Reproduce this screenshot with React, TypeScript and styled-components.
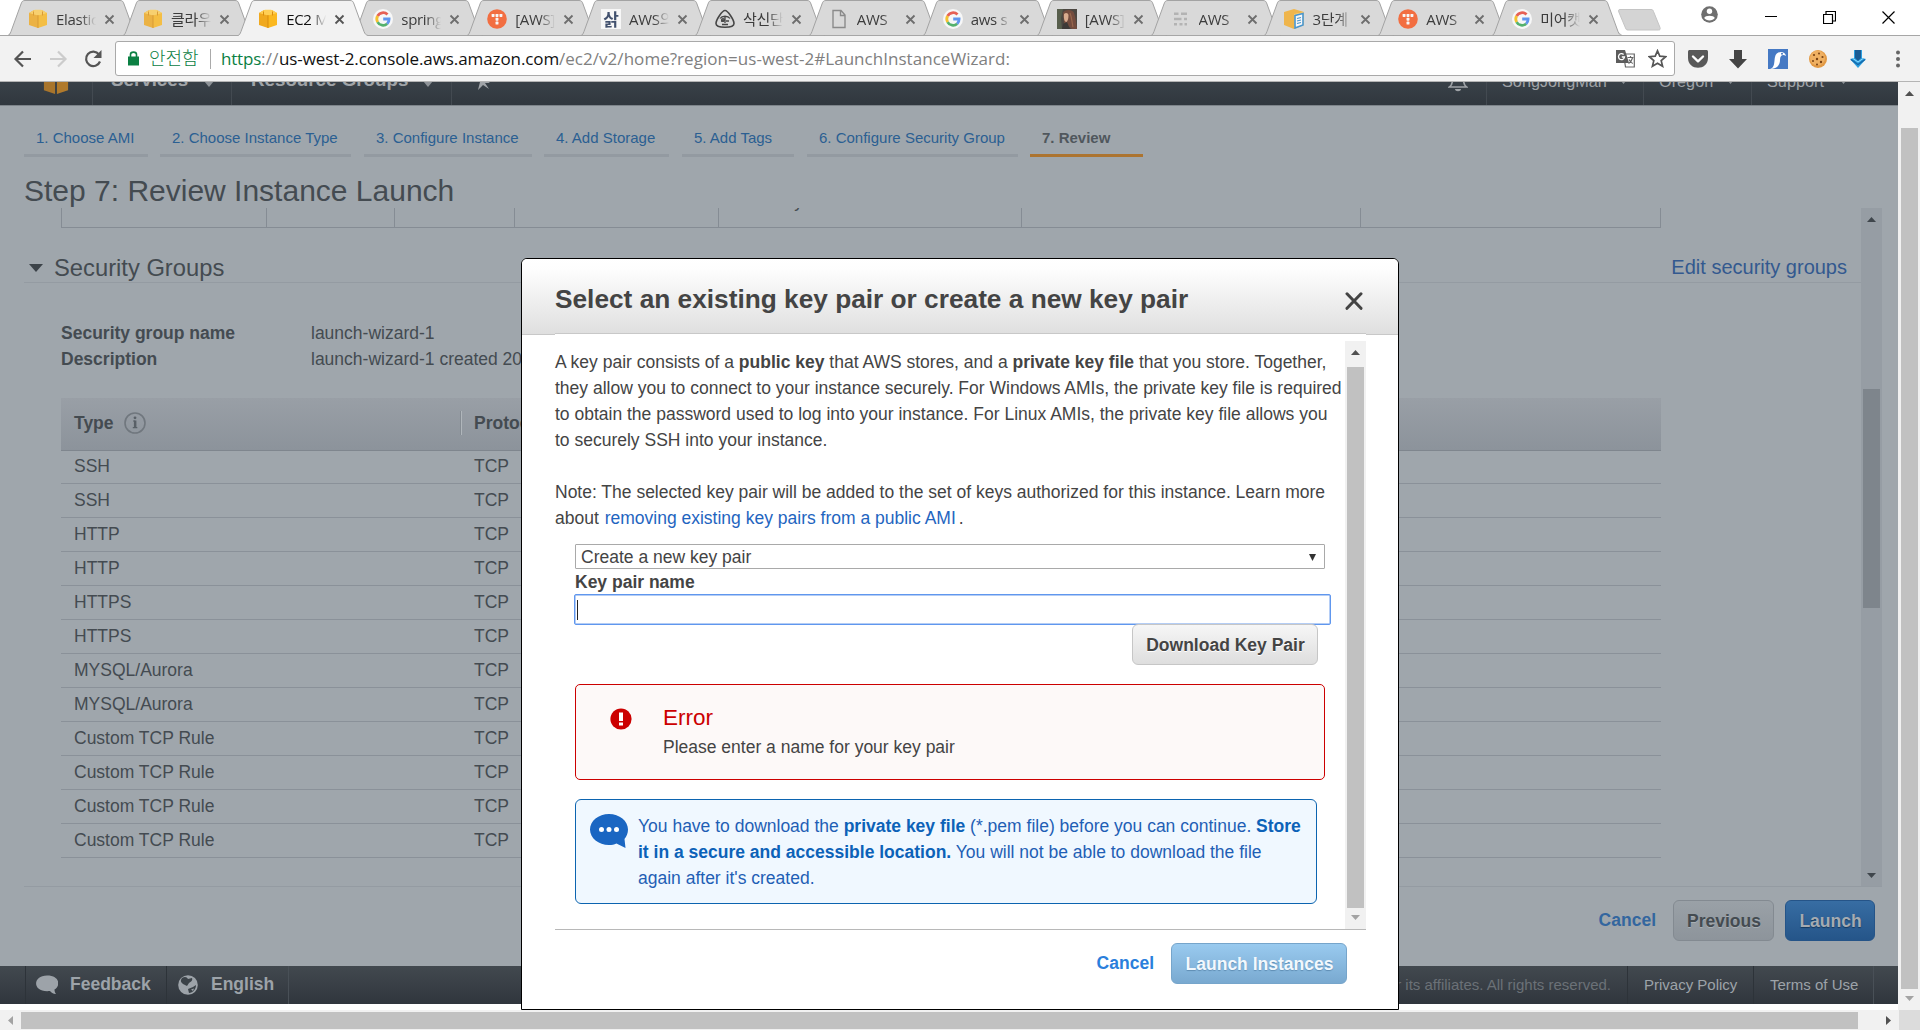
import React from "react";
import styled, { createGlobalStyle, css } from "styled-components";

const arial = `"Liberation Sans", Arial, "Noto Sans CJK KR", sans-serif`;
const ui = `"Open Sans", "Noto Sans CJK KR", "Noto Sans", sans-serif`;

const GlobalStyle = createGlobalStyle`
  *, *::before, *::after { box-sizing: border-box; }
  html, body { margin: 0; padding: 0; overflow: hidden; background: #fff; }
  svg { display: block; flex: none; }
`;

const Screen = styled.div`
  position: relative;
  display: flex;
  flex-direction: column;
  width: 1920px;
  height: 1030px;
  overflow: hidden;
  background: #fff;
  font-family: ${arial};
  font-size: 17.5px;
  color: #444;
`;

/* ---------- browser tab strip ---------- */

const TabStrip = styled.div`
  display: flex;
  flex: none;
  height: 36px;
  padding-left: 8px;
  border-bottom: 1px solid #a6a6a6;
`;

const TabItem = styled.div<{ $active?: boolean; $w: number }>`
  position: relative;
  z-index: ${(p) => (p.$active ? 2 : 1)};
  display: flex;
  align-items: center;
  flex: none;
  width: ${(p) => p.$w}px;
  height: 36px;
  padding: 2px 0 0 20px;
`;

const TabShape = styled.svg`
  position: absolute;
  left: 0;
  top: 0;
`;

const TabIcon = styled.div<{ $dim: boolean }>`
  position: relative;
  flex: none;
  width: 20px;
  height: 20px;
  opacity: ${(p) => (p.$dim ? 0.8 : 1)};
`;

const TabTitle = styled.div<{ $active?: boolean }>`
  position: relative;
  flex: none;
  width: 41px;
  margin-left: 8px;
  white-space: nowrap;
  font: 15px/22px ${ui};
  letter-spacing: -0.3px;
  color: ${(p) => (p.$active ? "#111" : "#3c3c3c")};
  mask-image: linear-gradient(to right, #000 60%, transparent 98%);
`;

const TabClose = styled.svg`
  position: relative;
  margin-left: 7px;
`;

const NewTab = styled.svg`
  margin: 9px 0 0 12px;
`;

const WindowControls = styled.div`
  display: flex;
  flex: 1;
  align-items: flex-start;
  padding-left: 37px;
  height: 35px;
`;

const ControlSlot = styled.div<{ $w: number; $top: number }>`
  display: flex;
  justify-content: center;
  flex: none;
  width: ${(p) => p.$w}px;
  padding-top: ${(p) => p.$top}px;
`;

/* ---------- address bar ---------- */

const Toolbar = styled.div`
  display: flex;
  align-items: center;
  flex: none;
  height: 46px;
  padding-left: 13px;
  background: #f2f2f2;
  border-bottom: 1px solid #b4b4b4;
`;

const NavButton = styled.div`
  display: flex;
  flex: none;
  width: 35px;
`;

const AddressBar = styled.div`
  display: flex;
  align-items: center;
  flex: none;
  width: 1560px;
  height: 35px;
  margin: 0 0 0 -3px;
  padding-left: 12px;
  background: #fff;
  border: 1px solid #a9a9a9;
  border-radius: 3px;
`;

const Secure = styled.span`
  flex: none;
  width: 62px;
  height: 20px;
  margin-left: 10px;
  font: 300 18px/18px ${ui};
  white-space: nowrap;
  color: #0b8043;
  border-right: 1px solid #aaa;
`;

const Url = styled.div`
  display: flex;
  flex: 1;
  margin-left: 10px;
  font: 17px/24px ${ui};
  white-space: pre;
  color: #808080;
`;

const UrlPart = styled.span<{ $color: string; $w: number; $ls: number }>`
  flex: none;
  width: ${(p) => p.$w}px;
  letter-spacing: ${(p) => p.$ls}px;
  color: ${(p) => p.$color};
`;

const BarIcons = styled.div`
  display: flex;
  align-items: center;
  gap: 13px;
  padding-right: 7px;
`;

const Extensions = styled.div`
  display: flex;
  align-items: center;
  gap: 20px;
  margin-left: 13px;
`;

/* ---------- scrollbars ---------- */

const Bar = styled.div<{ $bg: string }>`
  display: flex;
  flex-direction: column;
  align-items: center;
  flex: none;
  width: 21px;
  background: ${(p) => p.$bg};
`;

const ArrowCell = styled.div<{ $h: number; $top: number }>`
  flex: none;
  height: ${(p) => p.$h}px;
  padding-top: ${(p) => p.$top}px;
`;

const Thumb = styled.div<{ $h: number; $bg: string }>`
  flex: none;
  width: 17px;
  height: ${(p) => p.$h}px;
  background: ${(p) => p.$bg};
`;

const BarSpacer = styled.div`
  flex: 1;
`;

const HBar = styled.div`
  display: flex;
  align-items: center;
  flex: none;
  height: 20px;
  background: #f1f1f1;
`;

const HThumb = styled.div`
  width: 1837px;
  height: 17px;
  margin-left: 8px;
  background: #c1c1c1;
`;

const Corner = styled.div`
  width: 21px;
  height: 20px;
  margin-left: auto;
  background: #dcdcdc;
`;

/* ---------- console page ---------- */

const Viewport = styled.div`
  display: flex;
  flex: none;
  height: 928px;
  background: #f1f1f1;
`;

const Page = styled.div`
  display: flex;
  flex-direction: column;
  flex: none;
  width: 1898px;
  margin-right: 1px;
  padding-bottom: 6px;
  background: #fff;
`;

const NavWindow = styled.div`
  display: flex;
  align-items: flex-end;
  flex: none;
  height: 24px;
  overflow: hidden;
  background: linear-gradient(#394148, #30373e);
  border-bottom: 1px solid #7d848a;
`;

const NavRow = styled.div`
  display: flex;
  align-items: center;
  flex: 1;
  height: 50px;
  color: #a0a4a8;
`;

const NavItem = styled.div<{ $w: number; $pad: number; $bold?: boolean; $rule?: boolean }>`
  display: flex;
  align-items: center;
  flex: none;
  width: ${(p) => p.$w}px;
  height: 50px;
  padding: ${(p) => (p.$bold ? 0 : 2)}px 0 0 ${(p) => p.$pad}px;
  white-space: nowrap;
  font-size: ${(p) => (p.$bold ? 18.75 : 16.25)}px;
  font-weight: ${(p) => (p.$bold ? 700 : 400)};
  ${(p) =>
    p.$rule &&
    css`
      border-left: 1px solid #434a51;
    `}
`;

const NavLabel = styled.span<{ $w: number }>`
  flex: none;
  width: ${(p) => p.$w}px;
`;

const NavCaretIcon = styled.svg<{ $drop: number }>`
  margin-top: ${(p) => p.$drop}px;
`;

const Main = styled.div`
  display: flex;
  flex-direction: column;
  flex: 1;
  min-height: 0;
  background: #9fa6ac;
  color: #444b51;
`;

const Steps = styled.div`
  display: flex;
  flex: none;
  padding-left: 24px;
`;

const Step = styled.div<{ $w: number; $gap: number; $active?: boolean }>`
  flex: none;
  width: ${(p) => p.$w}px;
  height: 51px;
  margin-right: ${(p) => p.$gap}px;
  padding: 22px 0 0 12px;
  white-space: nowrap;
  font-size: 15px;
  line-height: 20px;
  font-weight: ${(p) => (p.$active ? 700 : 400)};
  color: ${(p) => (p.$active ? "#50575d" : "#2b5f92")};
  border-bottom: 3px solid ${(p) => (p.$active ? "#ac7430" : "#939aa1")};
`;

const Title = styled.h1`
  flex: none;
  height: 51px;
  margin: 0;
  padding: 16px 0 0 24px;
  font-size: 30px;
  line-height: 35px;
  font-weight: 400;
`;

const ScrollRegion = styled.div`
  display: flex;
  flex: none;
  width: 1858px;
  height: 679px;
  margin-left: 24px;
  border-bottom: 1px solid #949ba2;
`;

const ScrollContent = styled.div`
  flex: 1;
  overflow: hidden;
`;

const InstanceRow = styled.div`
  display: flex;
  width: 1600px;
  height: 20px;
  margin-left: 37px;
  overflow: hidden;
  border-bottom: 1px solid #858c94;
  border-right: 1px solid #858c94;
`;

const InstanceCell = styled.div<{ $w: number }>`
  flex: none;
  width: ${(p) => p.$w}px;
  padding-left: 12px;
  border-left: 1px solid #858c94;
  line-height: 26px;
`;

const CellText = styled.div`
  margin-top: -20px;
`;

const SectionHead = styled.div`
  display: flex;
  align-items: flex-end;
  height: 55px;
  padding: 0 14px 0 5px;
  line-height: 30px;
  border-bottom: 1px solid #949ba2;
`;

const SectionTitle = styled.h2`
  margin: 0 auto 0 11px;
  font-size: 23.75px;
  line-height: 28px;
  font-weight: 400;
`;

const SectionCaret = styled.svg`
  margin-bottom: 10px;
`;

const EditLink = styled.a`
  font-size: 20px;
  color: #33598f;
`;

const Details = styled.dl`
  display: grid;
  grid-template-columns: 250px 1fr;
  margin: 0;
  padding: 37px 0 26px 37px;
  line-height: 26px;
`;

const Term = styled.dt`
  font-weight: 700;
`;

const Value = styled.dd`
  margin: 0;
`;

const RuleTable = styled.div`
  width: 1600px;
  margin-left: 37px;
`;

const RuleHead = styled.div`
  display: flex;
  align-items: center;
  height: 53px;
  padding: 0 0 2px 13px;
  font-weight: 700;
  background: linear-gradient(#999fa6, #8c939b);
  border-bottom: 1px solid #7f868e;
`;

const TypeHead = styled.div`
  display: flex;
  align-items: center;
  gap: 10px;
  width: 387px;
`;

const ProtoHead = styled.div`
  height: 24px;
  padding-left: 12px;
  line-height: 24px;
  border-left: 1px solid #b0b6bb;
  box-shadow: -1px 0 0 #858c93;
`;

const RuleRow = styled.div`
  display: flex;
  height: 34px;
  padding-left: 13px;
  line-height: 32px;
  border-bottom: 1px solid #8a9199;
  &:nth-child(2) {
    height: 33px;
    line-height: 30px;
  }
`;

const RuleType = styled.div`
  width: 400px;
`;

const Actions = styled.div`
  display: flex;
  align-items: flex-start;
  justify-content: flex-end;
  flex: 1;
  padding: 13px 23px 0 0;
`;

const TextAction = styled.a<{ $color: string }>`
  margin: 7px 17px 0 0;
  font-weight: 700;
  line-height: 26px;
  color: ${(p) => p.$color};
`;

const tones = {
  light: css`
    color: #444;
    text-shadow: 0 1px 0 #fff;
    background: linear-gradient(#f6f6f6, #dedede);
    border-color: #c6c6c6;
  `,
  dimLight: css`
    color: #444b51;
    text-shadow: 0 1px 0 #a9b0b5;
    background: linear-gradient(#9aa1a7, #8d949b);
    border-color: #838a91;
  `,
  dimBlue: css`
    color: #a5abb1;
    text-shadow: 0 1px 1px #16395e;
    background: linear-gradient(#376da3, #255589);
    border-color: #255488;
  `,
  paleBlue: css`
    color: #f2f8fd;
    text-shadow: 0 1px 1px #5f8db3;
    background: linear-gradient(#99caef, #79a9d0);
    border-color: #76a5cb;
  `,
};

const Button = styled.button<{ $w: number; $tone: keyof typeof tones }>`
  flex: none;
  width: ${(p) => p.$w}px;
  height: 41px;
  padding: 1px 0 0 1px;
  font: 700 17.5px/26px ${arial};
  border: 1px solid;
  border-radius: 6px;
  ${(p) => tones[p.$tone]}
`;

const Gap = styled.div<{ $w: number }>`
  flex: none;
  width: ${(p) => p.$w}px;
`;

const Footer = styled.div`
  display: flex;
  flex: none;
  height: 38px;
  padding-left: 25px;
  background: linear-gradient(#42494f, #30363d);
  color: #9da3a9;
`;

const FooterItem = styled.div<{ $w: number; $pad: number; $small?: boolean; $end?: boolean }>`
  display: flex;
  align-items: center;
  flex: none;
  width: ${(p) => p.$w}px;
  padding: 0 0 1px ${(p) => p.$pad}px;
  white-space: nowrap;
  font-size: ${(p) => (p.$small ? 15 : 17.5)}px;
  font-weight: ${(p) => (p.$small ? 400 : 700)};
  border-left: 1px solid #2d3339;
  ${(p) => p.$end && "border-right: 1px solid #495057;"}
`;

const Copyright = styled.div`
  margin-left: auto;
  padding: 1px 16px 0 0;
  font-size: 15px;
  line-height: 36px;
  color: #6b7177;
`;

/* ---------- dialog ---------- */

const Dialog = styled.div`
  position: absolute;
  left: 521px;
  top: 258px;
  width: 878px;
  height: 752px;
  background: #fff;
  border: 1px solid #000;
  border-radius: 6px 6px 0 0;
  overflow: hidden;
`;

const DialogHead = styled.div`
  display: flex;
  align-items: center;
  justify-content: space-between;
  height: 76px;
  padding: 9px 35px 0 33px;
  background: linear-gradient(#fff, #fdfdfd 15%, #dfdfdf);
  border-bottom: 1px solid #c8c8c8;
`;

const DialogTitle = styled.h3`
  margin: 0 0 4px;
  font-size: 26.25px;
  line-height: 32px;
  color: #444;
`;

const DialogBody = styled.div`
  position: relative;
  display: flex;
  height: 597px;
  margin: -2px 32px 0 33px;
  padding-top: 7px;
  background: #fff;
  border-top: 1px solid #c8c8c8;
  border-bottom: 1px solid #b8b8b8;
`;

const DialogContent = styled.div`
  flex: 1;
  min-width: 0;
  padding-top: 8px;
  line-height: 26px;
`;

const Paragraph = styled.p`
  margin: 0 0 26px;
  white-space: nowrap;
`;

const Note = styled.p`
  margin: 0;
  white-space: nowrap;
`;

const Link = styled.a`
  margin: 0 3px 0 1px;
  color: #1f65bf;
`;

const Form = styled.div`
  display: flex;
  flex-direction: column;
  padding: 13px 0 0 20px;
`;

const Select = styled.div`
  display: flex;
  align-items: center;
  justify-content: space-between;
  width: 750px;
  height: 25px;
  padding: 1px 8px 0 5px;
  line-height: 23px;
  border: 1px solid #a9a9a9;
  border-radius: 1px;
`;

const Label = styled.label`
  height: 25px;
  font-weight: 700;
  line-height: 27px;
`;

const TextInput = styled.div`
  width: 757px;
  height: 31px;
  margin-left: -1px;
  padding: 5px 0 0 2px;
  border: 1px solid #6097ee;
  border-radius: 2px;
  box-shadow: inset 0 0 0 0.5px #6a9cec;
`;

const Caret = styled.div`
  width: 1px;
  height: 20px;
  background: #222;
`;

const ButtonRow = styled.div`
  display: flex;
  justify-content: flex-end;
  width: 743px;
  margin-top: -1px;
`;

const ErrorBox = styled.div`
  display: flex;
  width: 750px;
  height: 96px;
  margin-top: 19px;
  padding: 20px 0 0 34px;
  background: #fdf9f8;
  border: 1px solid #c00;
  border-radius: 5px;
`;

const ErrorIcon = styled.svg`
  margin: 3px 31px 0 0;
`;

const ErrorTitle = styled.div`
  height: 29px;
  font-size: 22.5px;
  line-height: 26px;
  color: #c00;
`;

const InfoBox = styled.div`
  display: flex;
  width: 742px;
  height: 105px;
  margin-top: 19px;
  padding: 13px 0 0 14px;
  white-space: nowrap;
  color: #1f5fb5;
  background: #f0f8ff;
  border: 1px solid #0c64b0;
  border-radius: 6px;
  & b {
    color: #0c62b8;
  }
`;

const InfoIcon = styled.svg`
  margin: 1px 10px 0 0;
`;

const DialogFoot = styled.div`
  display: flex;
  justify-content: flex-end;
  padding: 13px 51px 0 0;
`;

/* ---------- drawings ---------- */

const Tri = ({ dir, fill }: { dir: "up" | "down"; fill: string }) => (
  <svg width="9" height="5" viewBox="0 0 9 5">
    <path d={dir === "up" ? "M0 5L4.5 0L9 5Z" : "M0 0L4.5 5L9 0Z"} fill={fill} />
  </svg>
);

const Cube = () => (
  <svg width="20" height="20" viewBox="0 0 20 20">
    <path d="M1 4l5-3 4 1v17l-9-3z" fill="#f0a91f" />
    <path d="M19 4l-5-3-4 1v17l9-3z" fill="#fbb81f" />
    <path d="M1 4l6-3.200h6L19 4l-9 2.400z" fill="#ffcf55" />
    <path d="M10 6v13M5.500 2.500v4M14.500 2.500v4" stroke="#d98b0f" strokeWidth="1" fill="none" />
  </svg>
);

const Google = () => (
  <svg width="20" height="20" viewBox="0 0 20 20">
    <circle cx="10" cy="10" r="10" fill="#fff" />
    <g fill="none" strokeWidth="2.800">
      <path d="M14.500 5.600A6.200 6.200 0 0 0 4.600 7" stroke="#ea4335" />
      <path d="M4.600 7a6.200 6.200 0 0 0 0 6.100" stroke="#fbbc05" />
      <path d="M4.600 13.100a6.200 6.200 0 0 0 9.600 1.600" stroke="#34a853" />
      <path d="M14.200 14.700A6.200 6.200 0 0 0 16.100 10H10.200" stroke="#4285f4" />
    </g>
  </svg>
);

const Tistory = () => (
  <svg width="20" height="20" viewBox="0 0 20 20">
    <circle cx="10" cy="10" r="9.800" fill="#f9541c" />
    <g fill="#fff">
      <rect x="4.600" y="5" width="2.900" height="2.900" rx=".6" />
      <rect x="8.550" y="5" width="2.900" height="2.900" rx=".6" />
      <rect x="12.500" y="5" width="2.900" height="2.900" rx=".6" />
      <rect x="8.550" y="8.800" width="2.900" height="2.900" rx=".6" />
      <rect x="8.550" y="12.600" width="2.900" height="2.900" rx=".6" />
    </g>
  </svg>
);

const GlyphTile = styled.div`
  width: 20px;
  height: 20px;
  background: #fff;
  color: #1d3054;
  font: 700 17px/19px "Noto Sans CJK KR", sans-serif;
  text-align: center;
`;

const TriangleFace = () => (
  <svg width="20" height="20" viewBox="0 0 20 20" fill="none" stroke="#222" strokeWidth="1.600">
    <path d="M10 1.500c3 0 9 9.500 9 13 0 5-18 5-18 0 0-3.500 6-13 9-13z" />
    <path d="M5 9.500c2-3 8-3 10 0M6 12h3M11 12h3M10 8v6M7 15.500h6" strokeWidth="1.300" />
    <circle cx="8" cy="11" r="1.300" />
  </svg>
);

const Doc = () => (
  <svg width="20" height="20" viewBox="0 0 20 20" fill="none" stroke="#777" strokeWidth="1.400">
    <path d="M4 1.500h8l4 4.500v12.500H4zM11.500 1.500v5H16" />
  </svg>
);

const Portrait = () => (
  <svg width="20" height="20" viewBox="0 0 20 20">
    <rect width="20" height="20" fill="#29231c" />
    <path d="M0 0h6L4 9l1 11H0z" fill="#37402a" />
    <path d="M6 4c1-4 10-4 11 0 2 5 2 10 3 16h-5L7 14z" fill="#5b2a18" />
    <path d="M13 4c2 5 2 10 3 14" fill="none" stroke="#8a4a2a" strokeWidth="1.200" />
    <path d="M7 5c2-2 4-1 4.500 1 0 4-1 6-2 7-2 0-3-3-2.500-8z" fill="#d9a07c" />
    <path d="M6 15l4-2 3 7H5z" fill="#17120f" />
  </svg>
);

const Dashes = () => (
  <svg width="20" height="20" viewBox="0 0 20 20" fill="#aaa">
    <path d="M3 3.500h4.500V6H3zM10 3.500h6V6h-6zM3 8.700h7.500v2.500H3zM13 8.700h3v2.500h-3zM3 14h3v2.500H3zM8.500 14h3v2.500h-3zM13.500 14H16v2.500h-2.500z" />
  </svg>
);

const CubeDoc = () => (
  <svg width="20" height="20" viewBox="0 0 20 20">
    <path d="M0 3l10-3 10 3v13l-10 4L0 16z" fill="#f5ad2a" />
    <path d="M10 5l10-2v13l-10 4z" fill="#ffcb66" />
    <path d="M11 6.500l8-2v11.500l-8 3z" fill="#fff" stroke="#2486cf" strokeWidth="1.600" />
    <path d="M13 9.500l4-1M13 12l4-1M13 14.500l4-1" stroke="#2486cf" strokeWidth="1.200" />
  </svg>
);

const tabs: { title: string; icon: React.ReactNode; active?: boolean }[] = [
  { title: "Elastic", icon: <Cube /> },
  { title: "클라우", icon: <Cube /> },
  { title: "EC2 M", icon: <Cube />, active: true },
  { title: "spring", icon: <Google /> },
  { title: "[AWS]", icon: <Tistory /> },
  { title: "AWS의", icon: <GlyphTile>삵</GlyphTile> },
  { title: "삭신단", icon: <TriangleFace /> },
  { title: "AWS", icon: <Doc /> },
  { title: "aws s", icon: <Google /> },
  { title: "[AWS]", icon: <Portrait /> },
  { title: "AWS", icon: <Dashes /> },
  { title: "3단계", icon: <CubeDoc /> },
  { title: "AWS", icon: <Tistory /> },
  { title: "미어캣", icon: <Google /> },
];

const BrowserTabs = () => (
  <TabStrip>
    {tabs.map((t, i) => (
      <TabItem key={i} $active={t.active} $w={i < 3 ? 115.1 : 113.9}>
        <TabShape width="131" height="36" viewBox="0 0 131 36">
          <path
            d={
              t.active
                ? "M0 35.500C1.500 35 2 34 3 31.500L13 4C14 1 15 .5 17 .5H112C114 .5 115 1 116 4L126 31.500C127 34 128 35 130 35.500V36H0Z"
                : "M0 35L3 31.500L13 4C14 1 15 .5 17 .5H112C114 .5 115 1 116 4L126 31.500L130 35Z"
            }
            fill={t.active ? "#f2f2f2" : "#d9d9d9"}
          />
          <path
            d="M0 35.500C1.500 35 2 34 3 31.500L13 4C14 1 15 .5 17 .5H112C114 .5 115 1 116 4L126 31.500C127 34 128 35 130 35.500"
            fill="none"
            stroke="#a3a3a3"
          />
        </TabShape>
        <TabIcon $dim={!t.active}>{t.icon}</TabIcon>
        <TabTitle $active={t.active}>{t.title}</TabTitle>
        <TabClose width="11" height="11" viewBox="0 0 11 11">
          <path d="M1.500 1.500L9.500 9.500M9.500 1.500L1.500 9.500" stroke={t.active ? "#555" : "#6e6e6e"} strokeWidth="1.800" />
        </TabClose>
      </TabItem>
    ))}
    <NewTab width="43" height="22" viewBox="0 0 43 22">
      <path d="M2 .5H33c1.500 0 2 .5 2.500 2l6.500 16c.5 2 0 2.500-1.500 2.500H10c-1.500 0-2-.5-2.500-2L.8 3C.3 1 .5.500 2 .5z" fill="#d4d4d4" stroke="#c4c4c4" />
    </NewTab>
    <WindowControls>
      <ControlSlot $w={22} $top={6}>
        <svg width="17" height="17" viewBox="0 0 17 17">
          <circle cx="8.500" cy="8.500" r="8.300" fill="#6f6f6f" />
          <circle cx="8.500" cy="5.300" r="2.700" fill="#fff" />
          <path d="M3.200 12c1-3 9.600-3 10.600 0-2 3.200-8.600 3.200-10.600 0z" fill="#fff" />
        </svg>
      </ControlSlot>
      <ControlSlot $w={102} $top={16}>
        <svg width="12" height="1"><path d="M0 .5h12" stroke="#000" /></svg>
      </ControlSlot>
      <ControlSlot $w={15} $top={11}>
        <svg width="13" height="13" viewBox="0 0 13 13" fill="none" stroke="#000">
          <path d="M.5 3.500h9v9h-9zM3 3V.5h9.500V10H10" strokeWidth="1.200" />
        </svg>
      </ControlSlot>
      <ControlSlot $w={103} $top={11}>
        <svg width="13" height="13" viewBox="0 0 13 13"><path d="M.5.500l12 12M12.500.500l-12 12" stroke="#000" strokeWidth="1.200" /></svg>
      </ControlSlot>
    </WindowControls>
  </TabStrip>
);

const AddressRow = () => (
  <Toolbar>
    <NavButton>
      <svg width="20" height="18" viewBox="0 0 20 18" fill="none" stroke="#555" strokeWidth="2.200">
        <path d="M18 9H3M10 1.500L2.500 9L10 16.500" />
      </svg>
    </NavButton>
    <NavButton>
      <svg width="20" height="18" viewBox="0 0 20 18" fill="none" stroke="#ccc" strokeWidth="2.200">
        <path d="M2 9H17M10 1.500L17.500 9L10 16.500" />
      </svg>
    </NavButton>
    <NavButton>
      <svg width="20" height="18" viewBox="0 0 20 18">
        <path d="M16 4.500A7.200 7.200 0 1 0 17 11.500" fill="none" stroke="#555" strokeWidth="2.200" />
        <path d="M18.500 0v8h-8z" fill="#555" />
      </svg>
    </NavButton>
    <AddressBar>
      <svg width="11" height="15" viewBox="0 0 11 15">
        <path d="M0 5.500h11v9H0z" fill="#0b8043" />
        <path d="M2.500 6V3.500C2.500.300 8.500.300 8.500 3.500V6" fill="none" stroke="#0b8043" strokeWidth="1.600" />
      </svg>
      <Secure>안전함</Secure>
      <Url>
        <UrlPart $w={40} $ls={-0.2} $color="#0b8043">https</UrlPart>
        <UrlPart $w={18} $ls={0.3} $color="#808080">://</UrlPart>
        <UrlPart $w={280} $ls={-0.09} $color="#111">us-west-2.console.aws.amazon.com</UrlPart>
        <UrlPart $w={452} $ls={0.04} $color="#808080">/ec2/v2/home?region=us-west-2#LaunchInstanceWizard:</UrlPart>
      </Url>
      <BarIcons>
        <svg width="19" height="19" viewBox="0 0 19 19">
          <path d="M7.500 5h10.800v13H9.500z" fill="#fff" stroke="#666" strokeWidth="1.200" />
          <path d="M0 1h9l4 13H0z" fill="#5c5c5c" />
          <path d="M7.600 5.500A3 3 0 1 0 8.500 8H5.800" fill="none" stroke="#fff" strokeWidth="1.300" />
          <path d="M11.500 8.500h6M14.500 7v1.500M16.500 9c-.8 3-2.500 4.500-4 5.500M13 10.500c1 2 2 3.200 3.800 4" fill="none" stroke="#666" strokeWidth="1.200" />
        </svg>
        <svg width="19" height="19" viewBox="0 0 19 19">
          <path d="M9.500 1.800l2.300 5.400 5.900.5-4.500 3.900 1.400 5.700-5.100-3-5.100 3 1.400-5.700L1.300 7.700l5.900-.5z" fill="none" stroke="#555" strokeWidth="1.700" />
        </svg>
      </BarIcons>
    </AddressBar>
    <Extensions>
      <svg width="20" height="20" viewBox="0 0 20 20">
        <path d="M0 3c0-1.500.5-2 2-2h16c1.500 0 2 .5 2 2v6c0 13-20 13-20 0z" fill="#595959" />
        <path d="M5 7.500l5 4.800 5-4.800" fill="none" stroke="#fff" strokeWidth="2.400" strokeLinecap="round" strokeLinejoin="round" />
      </svg>
      <svg width="20" height="20" viewBox="0 0 20 20"><path d="M6 1h8v9h5l-9 9.500L1 10h5z" fill="#454545" /></svg>
      <svg width="20" height="20" viewBox="0 0 20 20">
        <rect width="20" height="20" fill="#4579c4" />
        <path d="M2 20c5-1 4-8 5-12C8 2 17 1 18 7c-3-2-6-1-6 4 0 5-3 9-10 9z" fill="#fff" />
        <circle cx="14" cy="4.800" r="1" fill="#4579c4" />
      </svg>
      <svg width="20" height="20" viewBox="0 0 20 20">
        <circle cx="10" cy="10" r="9" fill="#e39a45" />
        <circle cx="9.500" cy="9" r="7.500" fill="#efb062" />
        <g fill="#7a4314">
          <circle cx="6" cy="6" r="1.100" /><circle cx="11" cy="4.500" r="1" /><circle cx="14.500" cy="8" r="1.100" />
          <circle cx="9" cy="10" r="1.200" /><circle cx="5" cy="12" r="1" /><circle cx="13" cy="13" r="1.200" /><circle cx="9" cy="15.500" r="1" />
        </g>
      </svg>
      <svg width="20" height="20" viewBox="0 0 20 20">
        <path d="M6 1h8v8l4 1-8 9-8-9 4-1z" fill="#2b9fe0" />
        <path d="M7 1h6v8l-3 3-3-3z" fill="#1b5c94" />
        <path d="M3 10.500l7 5 7-5" fill="none" stroke="#1769aa" strokeWidth="1.500" />
        <path d="M5 9.500l5 3.500 5-3.500" fill="none" stroke="#8fdcff" strokeWidth="1" />
      </svg>
      <svg width="20" height="20" viewBox="0 0 20 20" fill="#666">
        <circle cx="10" cy="3.500" r="2" /><circle cx="10" cy="10" r="2" /><circle cx="10" cy="16.500" r="2" />
      </svg>
    </Extensions>
  </Toolbar>
);

const NavCaret = ({ small }: { small?: boolean }) => (
  <NavCaretIcon $drop={small ? 2 : 8} width={small ? 7 : 10} height={small ? 4 : 6} viewBox="0 0 10 6">
    <path d="M0 0h10L5 6z" fill="#8d9297" />
  </NavCaretIcon>
);

const ConsoleNav = () => (
  <NavWindow>
    <NavRow>
      <NavItem $w={92} $pad={43}>
        <svg width="26" height="26" viewBox="0 0 26 28">
          <path d="M0 4l12-4v28L0 24z" fill="#a8752c" />
          <path d="M26 4L14 0v28l12-4z" fill="#b07a2c" />
        </svg>
      </NavItem>
      <NavItem $w={139} $pad={18} $bold $rule>
        <NavLabel $w={93}>Services</NavLabel><NavCaret />
      </NavItem>
      <NavItem $w={220} $pad={19} $bold $rule>
        <NavLabel $w={172}>Resource Groups</NavLabel><NavCaret />
      </NavItem>
      <NavItem $w={997} $pad={23} $rule>
        <svg width="16" height="18" viewBox="0 0 16 18">
          <path d="M3 0h7l1 8 4 3-5 0 4 6-6-4-5 5 2-8-4-1z" fill="#a0a4a8" />
        </svg>
      </NavItem>
      <NavItem $w={38} $pad={0}>
        <svg width="20" height="21" viewBox="0 0 20 21">
          <path d="M1.500 16c3-2 3-5 3-8 0-8 11-8 11 0 0 3 0 6 3 8z" fill="none" stroke="#a0a4a8" strokeWidth="1.700" />
          <path d="M7 18h6c0 3-6 3-6 0z" fill="#a0a4a8" />
        </svg>
      </NavItem>
      <NavItem $w={157} $pad={15} $rule>
        <NavLabel $w={118}>SongJongMan</NavLabel><NavCaret small />
      </NavItem>
      <NavItem $w={108} $pad={15} $rule>
        <NavLabel $w={68}>Oregon</NavLabel><NavCaret small />
      </NavItem>
      <NavItem $w={140} $pad={15} $rule>
        <NavLabel $w={73}>Support</NavLabel><NavCaret small />
      </NavItem>
    </NavRow>
  </NavWindow>
);

const steps: [string, number, number][] = [
  ["1. Choose AMI", 124, 12],
  ["2. Choose Instance Type", 191, 13],
  ["3. Configure Instance", 168, 12],
  ["4. Add Storage", 125, 13],
  ["5. Add Tags", 112, 13],
  ["6. Configure Security Group", 211, 12],
  ["7. Review", 113, 0],
];

const columnWidths = [205, 128, 120, 204, 303, 339, 299];

const rules = [
  "SSH", "SSH", "HTTP", "HTTP", "HTTPS", "HTTPS", "MYSQL/Aurora", "MYSQL/Aurora",
  "Custom TCP Rule", "Custom TCP Rule", "Custom TCP Rule", "Custom TCP Rule",
];

const ReviewPage = () => (
  <Page>
    <ConsoleNav />
    <Main>
      <Steps>
        {steps.map(([name, w, gap], i) => (
          <Step key={name} $w={w} $gap={gap} $active={i === 6}>{name}</Step>
        ))}
      </Steps>
      <Title>Step 7: Review Instance Launch</Title>
      <ScrollRegion>
        <ScrollContent>
          <InstanceRow>
            {columnWidths.map((w, i) => (
              <InstanceCell key={i} $w={w}>{i === 4 && <CellText>EBS only</CellText>}</InstanceCell>
            ))}
          </InstanceRow>
          <SectionHead>
            <SectionCaret width="14" height="8" viewBox="0 0 14 8"><path d="M0 0h14L7 8z" fill="#3c4349" /></SectionCaret>
            <SectionTitle>Security Groups</SectionTitle>
            <EditLink>Edit security groups</EditLink>
          </SectionHead>
          <Details>
            <Term>Security group name</Term>
            <Value>launch-wizard-1</Value>
            <Term>Description</Term>
            <Value>launch-wizard-1 created 2017</Value>
          </Details>
          <RuleTable>
            <RuleHead>
              <TypeHead>
                Type
                <svg width="22" height="22" viewBox="0 0 22 22">
                  <circle cx="11" cy="11" r="10" fill="none" stroke="#70777e" strokeWidth="1.600" />
                  <path d="M9 9h1.500v6.500M8.800 15.700h4.500" fill="none" stroke="#596067" strokeWidth="1.200" />
                  <path d="M11.200 8.500v7" stroke="#596067" strokeWidth="2.400" />
                  <circle cx="11" cy="5.800" r="1.400" fill="#596067" />
                </svg>
              </TypeHead>
              <ProtoHead>Protocol</ProtoHead>
            </RuleHead>
            {rules.map((r, i) => (
              <RuleRow key={i}>
                <RuleType>{r}</RuleType>
                <div>TCP</div>
              </RuleRow>
            ))}
          </RuleTable>
        </ScrollContent>
        <Bar $bg="#969da4">
          <ArrowCell $h={181} $top={9}><Tri dir="up" fill="#3f464c" /></ArrowCell>
          <Thumb $h={219} $bg="#7e858c" />
          <BarSpacer />
          <ArrowCell $h={13} $top={0}><Tri dir="down" fill="#3f464c" /></ArrowCell>
        </Bar>
      </ScrollRegion>
      <Actions>
        <TextAction $color="#33669f">Cancel</TextAction>
        <Button $w={101} $tone="dimLight">Previous</Button>
        <Gap $w={11} />
        <Button $w={90} $tone="dimBlue">Launch</Button>
      </Actions>
    </Main>
    <Footer>
      <FooterItem $w={141} $pad={10}>
        <svg width="22" height="20" viewBox="0 0 22 20">
          <path d="M11 .5C25 .5 24 12 18.500 14.500c0 2 .5 3 1.500 4.500-3 0-5-1.500-6-3C-4 18-4 .5 11 .5z" fill="#9da3a9" />
        </svg>
        <Gap $w={12} />
        Feedback
      </FooterItem>
      <FooterItem $w={123} $pad={10} $end>
        <svg width="22" height="20" viewBox="0 0 22 20">
          <circle cx="11" cy="10" r="9.800" fill="#9da3a9" />
          <path d="M5 3c3-2 5-1 6 1l4-1c1 2-1 4-3 5l-2 3-4-2C4 7 3 6 5 3zM11 14l5-2 3-2c0 4-3 8-7 8z" fill="#3b4248" />
          <path d="M14 14.500l3-1-1 2.500z" fill="#9da3a9" />
        </svg>
        <Gap $w={12} />
        English
      </FooterItem>
      <Copyright>© 2008 - 2017, Amazon Web Services, Inc. or its affiliates. All rights reserved.</Copyright>
      <FooterItem $w={126} $pad={16} $small>Privacy Policy</FooterItem>
      <FooterItem $w={121} $pad={16} $small $end>Terms of Use</FooterItem>
      <Gap $w={24} />
    </Footer>
  </Page>
);

const KeyPairDialog = () => (
  <Dialog>
    <DialogHead>
      <DialogTitle>Select an existing key pair or create a new key pair</DialogTitle>
      <svg width="18" height="18" viewBox="0 0 18 18">
        <path d="M2 1.800l14 14.500M16 1.800l-14 14.500" stroke="#444" strokeWidth="3" strokeLinecap="round" />
      </svg>
    </DialogHead>
    <DialogBody>
      <DialogContent>
        <Paragraph>
          A key pair consists of a <b>public key</b> that AWS stores, and a <b>private key file</b> that you store. Together,
          <br />
          they allow you to connect to your instance securely. For Windows AMIs, the private key file is required
          <br />
          to obtain the password used to log into your instance. For Linux AMIs, the private key file allows you
          <br />
          to securely SSH into your instance.
        </Paragraph>
        <Note>
          Note: The selected key pair will be added to the set of keys authorized for this instance. Learn more
          <br />
          about <Link>removing existing key pairs from a public AMI</Link>.
        </Note>
        <Form>
          <Select>
            Create a new key pair
            <svg width="7" height="7" viewBox="0 0 7 7"><path d="M0 0h7L3.500 7z" fill="#333" /></svg>
          </Select>
          <Label>Key pair name</Label>
          <TextInput><Caret /></TextInput>
          <ButtonRow>
            <Button $w={186} $tone="light">Download Key Pair</Button>
          </ButtonRow>
          <ErrorBox>
            <ErrorIcon width="22" height="22" viewBox="0 0 22 22">
              <circle cx="11" cy="11" r="10.600" fill="#c00" />
              <path d="M9 4.500h4v8.500H9zM9 14.500h4v3H9z" fill="#fff" />
            </ErrorIcon>
            <div>
              <ErrorTitle>Error</ErrorTitle>
              Please enter a name for your key pair
            </div>
          </ErrorBox>
          <InfoBox>
            <InfoIcon width="38" height="35" viewBox="0 0 38 35">
              <path d="M19 0C29.500 0 38 7 38 15.500c0 4-1.500 7-3.500 9.500L35.500 34 26.500 29.500C24 30.500 22 31 19 31 8.500 31 0 24 0 15.500S8.500 0 19 0z" fill="#1a66c2" />
              <circle cx="11.500" cy="15.500" r="2.500" fill="#fff" />
              <circle cx="19" cy="15.500" r="2.500" fill="#fff" />
              <circle cx="26.500" cy="15.500" r="2.500" fill="#fff" />
            </InfoIcon>
            <div>
              You have to download the <b>private key file</b> (*.pem file) before you can continue. <b>Store</b>
              <br />
              <b>it in a secure and accessible location.</b> You will not be able to download the file
              <br />
              again after it's created.
            </div>
          </InfoBox>
        </Form>
      </DialogContent>
      <Bar $bg="#f1f1f1">
        <ArrowCell $h={26} $top={9}><Tri dir="up" fill="#505050" /></ArrowCell>
        <Thumb $h={541} $bg="#c1c1c1" />
        <ArrowCell $h={21} $top={7}><Tri dir="down" fill="#a3a3a3" /></ArrowCell>
      </Bar>
    </DialogBody>
    <DialogFoot>
      <TextAction $color="#2a7fdc">Cancel</TextAction>
      <Button $w={176} $tone="paleBlue">Launch Instances</Button>
    </DialogFoot>
  </Dialog>
);

export default function App() {
  return (
    <Screen>
      <GlobalStyle />
      <BrowserTabs />
      <AddressRow />
      <Viewport>
        <ReviewPage />
        <Bar $bg="#f1f1f1">
          <ArrowCell $h={46} $top={9}><Tri dir="up" fill="#505050" /></ArrowCell>
          <Thumb $h={861} $bg="#c1c1c1" />
          <ArrowCell $h={21} $top={7}><Tri dir="down" fill="#a3a3a3" /></ArrowCell>
        </Bar>
      </Viewport>
      <HBar>
        <Gap $w={8} />
        <svg width="5" height="9" viewBox="0 0 5 9"><path d="M5 0v9L0 4.500z" fill="#a3a3a3" /></svg>
        <HThumb />
        <Gap $w={28} />
        <svg width="5" height="9" viewBox="0 0 5 9"><path d="M0 0v9l5-4.500z" fill="#505050" /></svg>
        <Corner />
      </HBar>
      <KeyPairDialog />
    </Screen>
  );
}
